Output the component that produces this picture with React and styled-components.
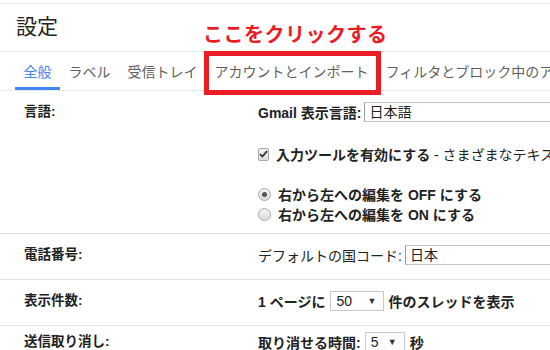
import React from 'react'
import styled, { createGlobalStyle } from 'styled-components'

const GlobalStyle = createGlobalStyle`
    html, body {
        margin: 0;
        padding: 0;
        background: #fff;
    }
    body {
        font-family: "Liberation Sans", "Noto Sans CJK JP", sans-serif;
        font-size: 13px;
        color: #222;
    }
`

const Page = styled.div`
    width: 550px;
    height: 350px;
    overflow: hidden;
    padding-top: 3px;
    box-sizing: border-box;
`

const Header = styled.div`
    position: relative;
    height: 47px;
    border-top: 1px solid #ebebeb;
    padding-left: 16px;
`

const Title = styled.h1`
    margin: 0;
    font-size: 21px;
    font-weight: normal;
    line-height: 46px;
    color: #222;
`

const Note = styled.div`
    position: absolute;
    left: 203px;
    top: 19px;
    font-size: 20px;
    font-weight: bold;
    line-height: 24px;
    letter-spacing: 0.5px;
    color: #ec1c24;
    white-space: nowrap;
`

const TabBar = styled.div`
    display: flex;
    height: 38px;
    border-top: 1px solid #ebebeb;
    border-bottom: 1px solid #ebebeb;
    padding-left: 15px;
    white-space: nowrap;
`

const Tab = styled.div`
    position: relative;
    display: flex;
    align-items: center;
    padding: 0 8.5px;
    font-size: 14px;
    color: ${ props => props.active ? '#4285f4' : '#5f5f5f' };
    box-shadow: ${ props => props.active ? 'inset 0 -3px 0 #4285f4' : 'none' };

    ${ props => props.marked && `
        &::after {
            content: '';
            position: absolute;
            left: -2px;
            right: -4px;
            top: -1px;
            bottom: -5px;
            border: 5px solid #ec1c24;
        }
    ` }
`

const Row = styled.div`
    display: grid;
    grid-template-columns: 234px 1fr;
    padding: ${ props => props.top ?? 11 }px 0 ${ props => props.bottom }px 24px;
    border-bottom: ${ props => props.last ? 'none' : '1px solid #e5e5e5' };
`

const Label = styled.div`
    font-weight: bold;
    font-size: 13.5px;
    line-height: 20px;
    white-space: nowrap;
`

const Value = styled.div`
    display: flex;
    flex-direction: column;
    min-width: 0;
    font-size: 14px;
`

const Line = styled.div`
    display: flex;
    align-items: center;
    height: 20px;
    white-space: nowrap;
    margin-top: ${ props => props.gap || 0 }px;
    font-weight: ${ props => props.bold ? 'bold' : 'normal' };
`

const Light = styled.span`
    font-weight: normal;
`

const TextBox = styled.div`
    flex: none;
    width: 260px;
    height: 18px;
    margin-left: ${ props => props.gap || 3 }px;
    padding-left: 4px;
    border: 1px solid #c4c4c4;
    border-left-color: #999;
    font-weight: normal;
    line-height: 18px;
`

const Select = styled.div`
    flex: none;
    display: flex;
    align-items: center;
    justify-content: space-between;
    width: ${ props => props.width }px;
    height: 18px;
    margin: 0 ${ props => props.after }px 0 ${ props => props.before }px;
    padding: 0 7px 0 5px;
    border: 1px solid #c8c8c8;
    font-weight: normal;
    font-size: 14px;

    span {
        font-size: 9px;
        color: #333;
    }
`

const Check = styled.span`
    display: inline-flex;
    align-items: center;
    justify-content: center;
    width: 11px;
    height: 11px;
    margin-right: 7px;
    border: 1px solid #a8a8a8;
    border-radius: 2px;
    background: linear-gradient(#f2f2f2, #dedede);
`

const Radio = styled.span`
    display: inline-flex;
    align-items: center;
    justify-content: center;
    width: 11px;
    height: 11px;
    margin-right: 7px;
    border: 1px solid #a8a8a8;
    border-radius: 50%;
    background: linear-gradient(#f4f4f4, #dcdcdc);

    &::after {
        content: '';
        display: ${ props => props.checked ? 'block' : 'none' };
        width: 5px;
        height: 5px;
        border-radius: 50%;
        background: #555;
    }
`

const tabs = ['全般', 'ラベル', '受信トレイ', 'アカウントとインポート', 'フィルタとブロック中のアドレス']

const App = () => {
    return (
        <Page>
            <GlobalStyle/>
            <Header>
                <Title>設定</Title>
                <Note>ここをクリックする</Note>
            </Header>
            <TabBar>
                { tabs.map((t, i) =>
                    <Tab key={ t } active={ i === 0 } marked={ i === 3 }>{ t }</Tab>
                ) }
            </TabBar>

            <Row bottom={ 9 }>
                <Label>言語:</Label>
                <Value>
                    <Line bold>Gmail 表示言語:<TextBox>日本語</TextBox></Line>
                    <Line bold gap={ 22 }>
                        <Check>
                            <svg width="9" height="8" viewBox="0 0 9 8">
                                <path d="M1 4.2 L3.4 6.5 L8 1.2" stroke="#333" strokeWidth="1.8" fill="none"/>
                            </svg>
                        </Check>
                        入力ツールを有効にする<Light>&nbsp;- さまざまなテキスト入力ツールを使用できます</Light>
                    </Line>
                    <Line bold gap={ 20 }><Radio checked/>右から左への編集を OFF にする</Line>
                    <Line bold><Radio/>右から左への編集を ON にする</Line>
                </Value>
            </Row>

            <Row bottom={ 14 }>
                <Label>電話番号:</Label>
                <Value>
                    <Line>デフォルトの国コード:<TextBox>日本</TextBox></Line>
                </Value>
            </Row>

            <Row bottom={ 14 }>
                <Label>表示件数:</Label>
                <Value>
                    <Line bold>
                        1 ページに
                        <Select width={ 40 } before={ 5 } after={ 4 }>50<span>▼</span></Select>
                        件のスレッドを表示
                    </Line>
                </Value>
            </Row>

            <Row top={ 6 } bottom={ 0 } last>
                <Label>送信取り消し:</Label>
                <Value>
                    <Line bold>
                        取り消せる時間:
                        <Select width={ 26 } before={ 4 } after={ 5 }>5<span>▼</span></Select>
                        秒
                    </Line>
                </Value>
            </Row>
        </Page>
    )
}

export default App
